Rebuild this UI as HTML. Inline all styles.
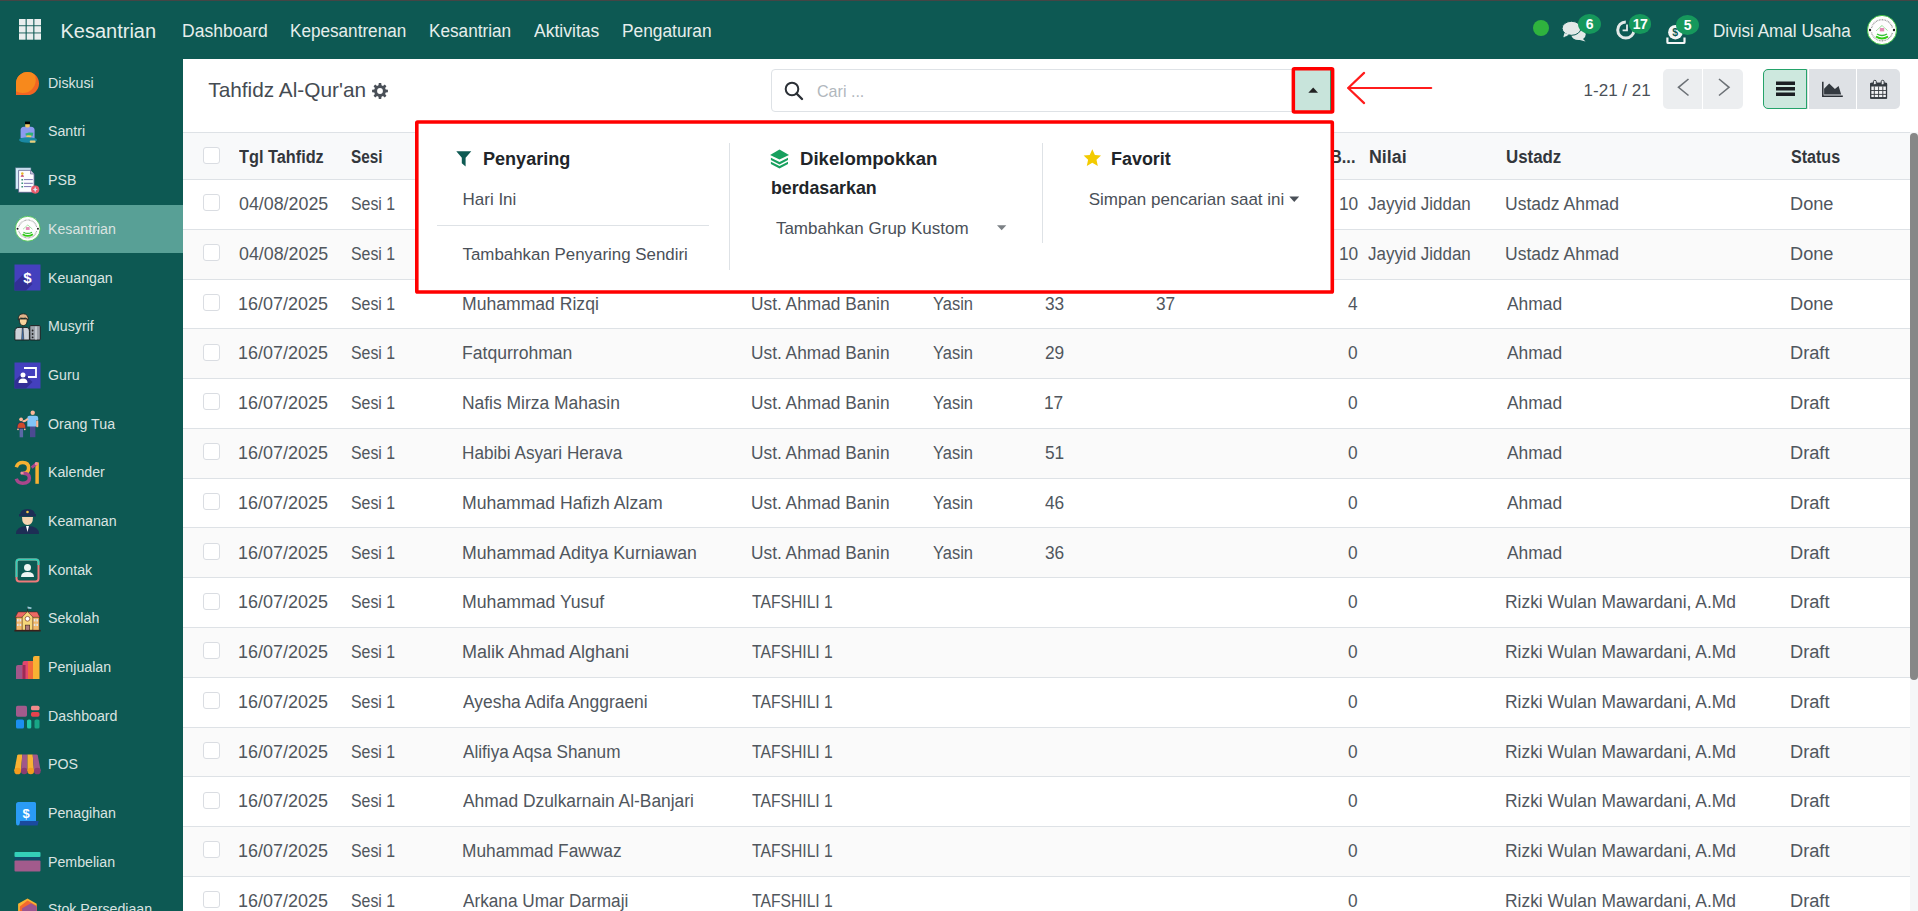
<!DOCTYPE html><html><head><meta charset="utf-8"><title>Tahfidz Al-Qur'an</title><style>
*{box-sizing:border-box;margin:0;padding:0}
html,body{width:1918px;height:911px;overflow:hidden;background:#fff;font-family:"Liberation Sans",sans-serif}
.a{position:absolute}
.t{position:absolute;white-space:nowrap;line-height:1}
svg{position:absolute;overflow:visible}
</style></head><body>
<div class="a" style="left:0;top:0;width:1918px;height:1px;background:#454545"></div><div class="a" style="left:0;top:1px;width:1918px;height:57.5px;background:#0d5953"></div><div class="a" style="left:0;top:58.5px;width:183px;height:853px;background:#0d5953"></div><div class="a" style="left:0;top:205px;width:183px;height:47.75px;background:#58a096"></div><svg style="left:0;top:0" width="60" height="58"><rect x="19.00" y="19.00" width="6.6" height="6.3" fill="#e9efee"/><rect x="26.70" y="19.00" width="6.6" height="6.3" fill="#e9efee"/><rect x="34.40" y="19.00" width="6.6" height="6.3" fill="#e9efee"/><rect x="19.00" y="26.20" width="6.6" height="6.3" fill="#e9efee"/><rect x="26.70" y="26.20" width="6.6" height="6.3" fill="#e9efee"/><rect x="34.40" y="26.20" width="6.6" height="6.3" fill="#e9efee"/><rect x="19.00" y="33.40" width="6.6" height="6.3" fill="#e9efee"/><rect x="26.70" y="33.40" width="6.6" height="6.3" fill="#e9efee"/><rect x="34.40" y="33.40" width="6.6" height="6.3" fill="#e9efee"/></svg><div class="t" style="left:60.50px;top:21.17px;font-size:20px;color:#e6eeec;">Kesantrian</div>
<div class="t" style="left:181.60px;top:22.06px;font-size:18px;color:#e6eeec;transform:scaleX(0.9741);transform-origin:0 0;">Dashboard</div>
<div class="t" style="left:290.03px;top:22.06px;font-size:18px;color:#e6eeec;transform:scaleX(0.9520);transform-origin:0 0;">Kepesantrenan</div>
<div class="t" style="left:428.73px;top:22.06px;font-size:18px;color:#e6eeec;transform:scaleX(0.9541);transform-origin:0 0;">Kesantrian</div>
<div class="t" style="left:533.90px;top:22.06px;font-size:18px;color:#e6eeec;transform:scaleX(0.9741);transform-origin:0 0;">Aktivitas</div>
<div class="t" style="left:622.21px;top:22.06px;font-size:18px;color:#e6eeec;transform:scaleX(0.9630);transform-origin:0 0;">Pengaturan</div>
<div class="a" style="left:1532.5px;top:20.3px;width:16px;height:16px;border-radius:50%;background:#2fb33e"></div><svg style="left:1558px;top:16px" width="32" height="30">
<ellipse cx="20.5" cy="18.5" rx="7.2" ry="5.6" fill="#e3e9e8"/>
<path d="M24 22 L27.5 25.5 L20 23.5Z" fill="#e3e9e8"/>
<path d="M7 17.5 L5 22 L11.5 19Z" fill="#e3e9e8" stroke="#0d5953" stroke-width="0.8"/>
<ellipse cx="13.5" cy="12.3" rx="9.4" ry="7" fill="#e3e9e8" stroke="#0d5953" stroke-width="1"/>
<path d="M6.5 17 L5.3 21 L11 18.3Z" fill="#e3e9e8"/>
</svg><svg style="left:1614px;top:18px" width="24" height="24">
<path d="M11.8 3.9 A8.1 8.1 0 1 0 19.9 12" fill="none" stroke="#e3e9e8" stroke-width="3"/>
<path d="M13 6.5 V12.3 H8.6" fill="none" stroke="#e3e9e8" stroke-width="1.8"/>
</svg><svg style="left:1664px;top:22px" width="24" height="24">
<path d="M3.4 15.5 V20.2 Q3.4 21 4.2 21 H19.7 Q20.5 21 20.5 20.2 V15.5" fill="none" stroke="#f4f6f6" stroke-width="2.2"/>
<circle cx="11.4" cy="10.2" r="7.3" fill="#f4f6f6"/>
<text x="11.2" y="14" font-size="10.5" font-family="Liberation Sans" font-weight="bold" text-anchor="middle" fill="#0d5953">$</text>
</svg><div class="a" style="left:1577.9px;top:14px;width:23.0px;height:20.0px;border-radius:50%;background:#16985c;color:#fff;font-weight:bold;font-size:14px;line-height:20.0px;text-align:center;letter-spacing:-0.5px">6</div><div class="a" style="left:1628.6px;top:14px;width:22.8px;height:20.0px;border-radius:50%;background:#16985c;color:#fff;font-weight:bold;font-size:14px;line-height:20.0px;text-align:center;letter-spacing:-0.5px">17</div><div class="a" style="left:1676px;top:15px;width:23.0px;height:20.0px;border-radius:50%;background:#16985c;color:#fff;font-weight:bold;font-size:14px;line-height:20.0px;text-align:center;letter-spacing:-0.5px">5</div><div class="t" style="left:1713.03px;top:22.36px;font-size:18px;color:#e6eeec;transform:scaleX(0.9502);transform-origin:0 0;">Divisi Amal Usaha</div>
<svg style="left:1867px;top:14.8px" width="30" height="30" viewBox="0 0 30 30">
<circle cx="15" cy="15" r="14.6" fill="#fdfdfd" stroke="#3ec43e" stroke-width="0.9"/>
<path d="M4.5 13 A10.8 10.8 0 0 1 25.5 13" fill="none" stroke="#9a9a9a" stroke-width="1.3" stroke-dasharray="0.9 0.7"/>
<path d="M4.5 17.5 A10.8 10.8 0 0 0 25.5 17.5" fill="none" stroke="#9a9a9a" stroke-width="1.3" stroke-dasharray="0.9 0.7"/>
<circle cx="3" cy="15" r="1.2" fill="#222"/><circle cx="27" cy="15" r="1.2" fill="#222"/>
<path d="M9.5 15.5 L15 10.5 L20.5 15.5" fill="none" stroke="#5fcf5f" stroke-width="1" stroke-dasharray="1 0.6"/>
<rect x="12.8" y="13" width="4.4" height="3.4" fill="#e58ab5"/>
<path d="M10 19 Q15 22 20 19" fill="none" stroke="#36c236" stroke-width="1.4"/>
<path d="M9 21.5 Q15 25.5 21 21.5" fill="none" stroke="#2fcc12" stroke-width="2"/>
</svg><div class="t" style="left:47.86px;top:74.76px;font-size:15.4px;color:#dae3e1;transform:scaleX(0.9220);transform-origin:0 0;">Diskusi</div>
<div class="t" style="left:48.36px;top:123.45px;font-size:15.4px;color:#dae3e1;transform:scaleX(0.9220);transform-origin:0 0;">Santri</div>
<div class="t" style="left:47.86px;top:172.14px;font-size:15.4px;color:#dae3e1;transform:scaleX(0.9220);transform-origin:0 0;">PSB</div>
<div class="t" style="left:47.86px;top:220.83px;font-size:15.4px;color:#dae3e1;transform:scaleX(0.9220);transform-origin:0 0;">Kesantrian</div>
<div class="t" style="left:47.86px;top:269.52px;font-size:15.4px;color:#dae3e1;transform:scaleX(0.9220);transform-origin:0 0;">Keuangan</div>
<div class="t" style="left:47.86px;top:318.21px;font-size:15.4px;color:#dae3e1;transform:scaleX(0.9220);transform-origin:0 0;">Musyrif</div>
<div class="t" style="left:48.29px;top:366.90px;font-size:15.4px;color:#dae3e1;transform:scaleX(0.9220);transform-origin:0 0;">Guru</div>
<div class="t" style="left:48.36px;top:415.59px;font-size:15.4px;color:#dae3e1;transform:scaleX(0.9220);transform-origin:0 0;">Orang Tua</div>
<div class="t" style="left:47.86px;top:464.28px;font-size:15.4px;color:#dae3e1;transform:scaleX(0.9220);transform-origin:0 0;">Kalender</div>
<div class="t" style="left:47.86px;top:512.97px;font-size:15.4px;color:#dae3e1;transform:scaleX(0.9220);transform-origin:0 0;">Keamanan</div>
<div class="t" style="left:47.86px;top:561.66px;font-size:15.4px;color:#dae3e1;transform:scaleX(0.9220);transform-origin:0 0;">Kontak</div>
<div class="t" style="left:48.36px;top:610.35px;font-size:15.4px;color:#dae3e1;transform:scaleX(0.9220);transform-origin:0 0;">Sekolah</div>
<div class="t" style="left:47.86px;top:659.04px;font-size:15.4px;color:#dae3e1;transform:scaleX(0.9220);transform-origin:0 0;">Penjualan</div>
<div class="t" style="left:47.86px;top:707.73px;font-size:15.4px;color:#dae3e1;transform:scaleX(0.9220);transform-origin:0 0;">Dashboard</div>
<div class="t" style="left:47.86px;top:756.42px;font-size:15.4px;color:#dae3e1;transform:scaleX(0.9220);transform-origin:0 0;">POS</div>
<div class="t" style="left:47.86px;top:805.11px;font-size:15.4px;color:#dae3e1;transform:scaleX(0.9220);transform-origin:0 0;">Penagihan</div>
<div class="t" style="left:47.86px;top:853.80px;font-size:15.4px;color:#dae3e1;transform:scaleX(0.9220);transform-origin:0 0;">Pembelian</div>
<div class="t" style="left:48.36px;top:901.29px;font-size:15.4px;color:#dae3e1;transform:scaleX(0.9220);transform-origin:0 0;">Stok Persediaan</div>
<svg style="left:14px;top:69.60px" width="27" height="27" viewBox="0 0 27 27"><defs><clipPath id="dk"><path d="M2 25 L2 13.5 A11.5 11.5 0 1 1 13.5 25 Z"/></clipPath></defs><g clip-path="url(#dk)"><rect x="0" y="0" width="27" height="27" fill="#f26522"/><circle cx="8.6" cy="9.8" r="13.2" fill="#f7891c"/></g></svg><svg style="left:14px;top:118.29px" width="27" height="27" viewBox="0 0 27 27"><rect x="11" y="3.6" width="5" height="2.9" fill="#000"/><path d="M11.2 6.3 H15.8 V9.5 Q15.8 10.8 13.5 10.8 Q11.2 10.8 11.2 9.5Z" fill="#f4c866"/><path d="M6.6 20 V12 Q6.6 8.9 10 8.7 L11.5 8.7 Q13.5 10.5 15.5 8.7 L17 8.7 Q20.6 8.9 20.6 12 V20Z" fill="#8c9cf0"/><path d="M11.4 15.5 L15 14.4 L19.4 14.8 L18.5 18.2 L12 18.2Z" fill="#2fb07a"/><path d="M12.2 17.5 Q14.5 16.8 17.5 17.6 L17 19.8 H12.6Z" fill="#f4c866"/><ellipse cx="14" cy="22" rx="9" ry="2.7" fill="#1a88a3"/><rect x="15.8" y="22.4" width="5.7" height="2.3" rx="0.8" fill="#e9cf7a"/></svg><svg style="left:14px;top:166.98px" width="27" height="27" viewBox="0 0 27 27"><rect x="1.7" y="0.9" width="15.2" height="21.1" fill="#d3ebf7" stroke="#7a86a8" stroke-width="0.5"/><path d="M4.6 3.3 H16.5 L20.1 7 V25.3 H4.6Z" fill="#fdfdff" stroke="#5c5c8c" stroke-width="0.8"/><path d="M16.5 3.3 V7 H20.1" fill="#c9c9e0" stroke="#5c5c8c" stroke-width="0.6"/><circle cx="8.3" cy="6.6" r="1.3" fill="#e8b830"/><path d="M6.6 9.8 Q6.6 8 8.3 8 Q10 8 10 9.8Z" fill="#c0406a"/><path d="M7.4 12 h1.7 v1.5 h-1.7z M7.4 15.6 h1.7 v1.5 h-1.7z M7.4 18.9 h1.7 v1.5 h-1.7z" fill="#3f8f7a"/><path d="M10 12.6 H18.8 M10 16.3 H18.8 M10 19.6 H17.5" stroke="#7a72b0" stroke-width="1"/><circle cx="21.2" cy="22.6" r="4.1" fill="#e95b6b"/><path d="M21.2 19.6 L22.4 22.6 L21.2 25.6 L20 22.6Z M18.6 22.6 L21.2 21.6 L23.8 22.6 L21.2 23.6Z" fill="#dfe3f3"/></svg><svg style="left:14.5px;top:216.07px" width="25.5" height="25.5" viewBox="0 0 30 30">
<circle cx="15" cy="15" r="14.6" fill="#fdfdfd" stroke="#3ec43e" stroke-width="0.9"/>
<path d="M4.5 13 A10.8 10.8 0 0 1 25.5 13" fill="none" stroke="#9a9a9a" stroke-width="1.3" stroke-dasharray="0.9 0.7"/>
<path d="M4.5 17.5 A10.8 10.8 0 0 0 25.5 17.5" fill="none" stroke="#9a9a9a" stroke-width="1.3" stroke-dasharray="0.9 0.7"/>
<circle cx="3" cy="15" r="1.2" fill="#222"/><circle cx="27" cy="15" r="1.2" fill="#222"/>
<path d="M9.5 15.5 L15 10.5 L20.5 15.5" fill="none" stroke="#5fcf5f" stroke-width="1" stroke-dasharray="1 0.6"/>
<rect x="12.8" y="13" width="4.4" height="3.4" fill="#e58ab5"/>
<path d="M10 19 Q15 22 20 19" fill="none" stroke="#36c236" stroke-width="1.4"/>
<path d="M9 21.5 Q15 25.5 21 21.5" fill="none" stroke="#2fcc12" stroke-width="2"/>
</svg><svg style="left:14px;top:264.36px" width="27" height="27" viewBox="0 0 27 27"><rect x="0.5" y="0.5" width="26" height="26" fill="#4440bd"/><path d="M0.5 26.5 L0.5 19 L9 10.5 L18.5 20 L12 26.5 Z" fill="#2c2a8a" opacity="0.75"/><text x="13.5" y="19" font-size="15" font-weight="bold" font-family="Liberation Sans" text-anchor="middle" fill="#fff">$</text></svg><svg style="left:14px;top:313.05px" width="27" height="27" viewBox="0 0 27 27"><rect x="15.8" y="12.6" width="10.5" height="14.4" rx="1" fill="#9ca2aa" stroke="#1a1a1a" stroke-width="0.9"/><path d="M22 13.5 V26.5" stroke="#c5cad0" stroke-width="2"/><circle cx="18.6" cy="17.5" r="0.9" fill="#222"/><circle cx="18.6" cy="21" r="0.9" fill="#222"/><circle cx="18.6" cy="24.3" r="0.9" fill="#222"/><path d="M0.9 27 V18.5 Q0.9 14.4 5 14.4 H12 Q15.4 14.4 15.4 18.5 V27Z" fill="#cdd1d8" stroke="#1a1a1a" stroke-width="0.9"/><path d="M8.3 15 L7.6 26.6 H9.8 L9.1 15Z" fill="#4a78b8" stroke="#1a1a1a" stroke-width="0.5"/><path d="M5.3 6 Q5.3 12.6 9.3 12.6 Q13.3 12.6 13.3 6Z" fill="#f8d49c" stroke="#1a1a1a" stroke-width="0.8"/><path d="M4.3 6.9 Q3.9 0.8 9.2 0.8 Q14.5 0.8 14.2 6.9 Q12 4 9.2 5.3 Q6.5 4 4.3 6.9Z" fill="#e0b48a" stroke="#1a1a1a" stroke-width="0.8"/></svg><svg style="left:14px;top:361.74px" width="27" height="27" viewBox="0 0 27 27"><rect x="0.5" y="0.5" width="26" height="26" fill="#4440bd"/><path d="M0.5 26.5 L0.5 19 L9 10.5 L18.5 20 L12 26.5 Z" fill="#2c2a8a" opacity="0.75"/><path d="M10 6 H22 V15 H14" fill="none" stroke="#fff" stroke-width="1.8"/><circle cx="9" cy="13" r="2.5" fill="#fff"/><path d="M4.5 21 Q4.5 16.5 9 16.5 Q13.5 16.5 13.5 21Z" fill="#fff"/></svg><svg style="left:14px;top:410.43px" width="27" height="27" viewBox="0 0 27 27"><rect x="16" y="16" width="5.4" height="11.2" fill="#4c4a92"/><path d="M13.3 16.5 V8 Q13.3 5.7 15.6 5.7 H21.7 Q24.2 5.7 24.2 8 V10.6 H22 V16.5Z" fill="#82c5f8"/><rect x="22.1" y="10.4" width="2.2" height="6.9" rx="1" fill="#fdb89a"/><circle cx="18.7" cy="2.7" r="2.2" fill="#fdb89a"/><path d="M14 8.8 Q11.5 11.2 8.5 11.6" fill="none" stroke="#fdb89a" stroke-width="2"/><circle cx="7.1" cy="9.3" r="1.9" fill="#fdb89a"/><rect x="5.6" y="18.5" width="3.5" height="8.8" fill="#5a68a6"/><path d="M3.1 18.3 Q3.1 12.3 7.4 12.3 Q11.8 12.3 11.8 18.3Z" fill="#d04a2a" stroke="#1d2466" stroke-width="0.6"/><circle cx="4" cy="19.3" r="0.9" fill="#fdb89a"/><circle cx="10.8" cy="19.3" r="0.9" fill="#fdb89a"/></svg><svg style="left:14px;top:459.12px" width="27" height="27" viewBox="0 0 27 27"><path d="M2.3 8.2 Q3.8 3.6 8.7 3.6 Q14.6 3.6 14.6 9 Q14.6 14.2 9.2 14.2" fill="none" stroke="#f6b132" stroke-width="3.5"/><path d="M9.2 14.2 Q15.4 14.2 15.4 19 Q15.4 24.2 8.7 24.2 Q3.8 24.2 2.3 19.8" fill="none" stroke="#a8468c" stroke-width="3.5"/><circle cx="8" cy="14.1" r="1.7" fill="#f08aa0"/><path d="M23.1 3.4 V24.8" stroke="#f6b132" stroke-width="3.5"/><path d="M17.6 8.6 L22.6 4.6" stroke="#a8468c" stroke-width="3"/><circle cx="22.4" cy="4.8" r="1.7" fill="#f08aa0"/></svg><svg style="left:14px;top:507.81px" width="27" height="27" viewBox="0 0 27 27"><path d="M6 7 Q6 1 13.5 1 Q21 1 21 7Z" fill="#1d2e55"/><rect x="5" y="6" width="17" height="2.5" fill="#1d2e55"/><circle cx="13.5" cy="4" r="1.3" fill="#f5c242"/><path d="M8 9 Q8 17 13.5 17 Q19 17 19 9Z" fill="#f7d6b2"/><path d="M2 26 Q2 18 13.5 18 Q25 18 25 26Z" fill="#1d2e55"/><path d="M12 18 L13.5 24 L15 18Z" fill="#fff"/></svg><svg style="left:14px;top:556.50px" width="27" height="27" viewBox="0 0 27 27"><rect x="2.5" y="2.5" width="22" height="22" rx="3" fill="none" stroke="#f07a7a" stroke-width="2"/><path d="M24.5 8 V5 Q24.5 2.5 22 2.5 H5 Q2.5 2.5 2.5 5 V20" fill="none" stroke="#34d0b8" stroke-width="2"/><circle cx="13.5" cy="10.5" r="3.5" fill="#eef5f3"/><path d="M7 20 Q7 15 13.5 15 Q20 15 20 20Z" fill="#eef5f3"/></svg><svg style="left:14px;top:605.19px" width="27" height="27" viewBox="0 0 27 27"><path d="M13.5 2 V7" stroke="#222" stroke-width="0.6"/><path d="M13.5 1.6 L17.7 2.4 L17.2 4.1 L13.5 3.6Z" fill="#9ccbd8"/><path d="M4 6.9 H23.3 L26 12.4 H1.2Z" fill="#ec6a64" stroke="#5a2020" stroke-width="0.6"/><rect x="2.1" y="12.2" width="23" height="13" fill="#f2b86a" stroke="#4a2a1a" stroke-width="0.5"/><path d="M13.5 6.6 L18.8 12 V25.3 H8.2 V12Z" fill="#f6d77a" stroke="#4a2a1a" stroke-width="0.6"/><circle cx="13.5" cy="13.8" r="2.4" fill="#fff" stroke="#8a4a3a" stroke-width="0.8"/><rect x="11.3" y="20.1" width="4.4" height="5.2" fill="#b07a7a" stroke="#3a1f1a" stroke-width="0.6"/><path d="M3 14 h1.6 v2.4 h-1.6z M5.6 14 h1.6 v2.4 h-1.6z M3 18.7 h1.6 v2.4 h-1.6z M5.6 18.7 h1.6 v2.4 h-1.6z M19.8 14 h1.6 v2.4 h-1.6z M22.4 14 h1.6 v2.4 h-1.6z M19.8 18.7 h1.6 v2.4 h-1.6z M22.4 18.7 h1.6 v2.4 h-1.6z" fill="#dfe4e8"/><rect x="0.4" y="24.9" width="26.3" height="1.6" fill="#3a1f1a"/></svg><svg style="left:14px;top:653.88px" width="27" height="27" viewBox="0 0 27 27"><path d="M2 25 V13 Q2 11 4 11 H9 V25Z" fill="#a0578a"/><path d="M8.5 25 V9 Q8.5 7 10.5 7 H15 V25Z" fill="#e2466e"/><path d="M8.5 25 V11 H11.5 V25Z" fill="#9c2b55"/><path d="M14 25 V7 H19.5 V25Z" fill="#f26b3a"/><path d="M19 25 V4 Q19 2 21 2 H25.5 V25Z" fill="#f9b233"/></svg><svg style="left:14px;top:702.57px" width="27" height="27" viewBox="0 0 27 27"><rect x="2" y="2.7" width="11" height="11" rx="1.6" fill="#a25b8c"/><rect x="17" y="2.7" width="8.5" height="4.6" rx="1.6" fill="#f28b8b"/><rect x="17" y="9.1" width="8.5" height="4.6" rx="1.6" fill="#e5424d"/><rect x="2" y="16.5" width="8" height="9" rx="1.6" fill="#1c8ff0"/><rect x="13" y="16.5" width="4.3" height="9" rx="1.6" fill="#21c7a8"/><rect x="20.5" y="16.5" width="5" height="9" rx="1.6" fill="#18a686"/></svg><svg style="left:14px;top:751.26px" width="27" height="27" viewBox="0 0 27 27"><path d="M3.2 4.4 Q3.5 3.6 4.5 3.6 H8.3 L7 20 H0.3 Z" fill="#f9b233"/><circle cx="3.65" cy="20" r="3.35" fill="#f39c1e"/><path d="M8.3 3.6 H13.5 V20 H7 Z" fill="#a0578a"/><circle cx="10.25" cy="20" r="3.25" fill="#8a3d72"/><path d="M13.5 3.6 H18.7 L20 20 H13.5 Z" fill="#f9b233"/><circle cx="16.75" cy="20" r="3.25" fill="#f39c1e"/><path d="M18.7 3.6 H22.5 Q23.5 3.6 23.8 4.4 L26.7 20 H20 Z" fill="#a0578a"/><circle cx="23.35" cy="20" r="3.35" fill="#8a3d72"/></svg><svg style="left:14px;top:799.95px" width="27" height="27" viewBox="0 0 27 27"><path d="M6 21 H24.7 L23.6 25.6 H4.5 Q6 25 6 21Z" fill="#1b4a9e"/><path d="M4.5 2 H20.5 Q22 2 22 3.5 V21 H6 Q6 25.6 3.8 25.6 Q2 25.6 2 23 V4.5 Q2 2 4.5 2 Z" fill="#2a9bf5"/><text x="12" y="18.3" font-size="13" font-weight="bold" font-family="Liberation Sans" text-anchor="middle" fill="#fff">$</text></svg><svg style="left:14px;top:848.64px" width="27" height="27" viewBox="0 0 27 27"><rect x="0.5" y="3" width="26" height="5" rx="1" fill="#34d0b8"/><rect x="0.5" y="8" width="26" height="3.5" fill="#114d6a"/><rect x="0.5" y="11.5" width="26" height="11" rx="1" fill="#a25b8c"/></svg><svg style="left:14px;top:897.33px" width="27" height="27" viewBox="0 0 27 27"><path d="M13.5 1.4 L22.7 6.7 V20 L13.5 25.3 L4.1 20 V6.7Z" fill="#f9b233"/><path d="M13.5 3.4 L22.7 8.7 V20 L13.5 25.3 L5.8 21 V9.4Z" fill="#f2682f"/><path d="M17 6.3 L22.7 9.6 V20 L13.5 25.3 L8.1 22.3 V11.2Z" fill="#9c5590"/></svg><div class="t" style="left:208.30px;top:80.29px;font-size:20.8px;color:#454b52;">Tahfidz Al-Qur'an</div>
<svg style="left:372.1px;top:83.3px" width="16" height="16" viewBox="0 0 16 16"><path fill="#4a5058" fill-rule="evenodd" d="M13.70 6.48 L15.91 6.80 L15.91 9.20 L13.70 9.52 L13.10 10.96 L14.44 12.75 L12.75 14.44 L10.96 13.10 L9.52 13.70 L9.20 15.91 L6.80 15.91 L6.48 13.70 L5.04 13.10 L3.25 14.44 L1.56 12.75 L2.90 10.96 L2.30 9.52 L0.09 9.20 L0.09 6.80 L2.30 6.48 L2.90 5.04 L1.56 3.25 L3.25 1.56 L5.04 2.90 L6.48 2.30 L6.80 0.09 L9.20 0.09 L9.52 2.30 L10.96 2.90 L12.75 1.56 L14.44 3.25 L13.10 5.04Z M8 5.1 A2.9 2.9 0 1 0 8 10.9 A2.9 2.9 0 1 0 8 5.1Z"/></svg><div class="a" style="left:771px;top:69px;width:563px;height:43px;border:1px solid #dee2e6;border-radius:4px;background:#fff"></div><svg style="left:784px;top:81px" width="20" height="20">
<circle cx="8" cy="8" r="6.3" fill="none" stroke="#2b3036" stroke-width="2"/>
<path d="M12.5 12.5 L18 18" stroke="#2b3036" stroke-width="2.4" stroke-linecap="round"/>
</svg><div class="t" style="left:817.40px;top:82.51px;font-size:17px;color:#b1b7bd;transform:scaleX(0.9454);transform-origin:0 0;">Cari ...</div>
<div class="a" style="left:1293px;top:69px;width:38px;height:43px;background:#c8e4db;border-right:1px solid #2aa06c"></div><svg style="left:1285px;top:60px" width="56" height="60"><rect x="8.35" y="8.75" width="39.3" height="43.2" rx="1" fill="none" stroke="#ff0000" stroke-width="3.5"/></svg><svg style="left:1308px;top:87px" width="11" height="6"><path d="M0.3 5.7 L5.2 0.5 L10 5.7Z" fill="#222"/></svg><svg style="left:1340px;top:65px" width="100" height="46"><path d="M91.2 23 H8.5" stroke="#ff1c1c" stroke-width="2.2" stroke-linecap="round"/><path d="M24.1 7.9 L8.2 23 L24.1 38.1" fill="none" stroke="#ff1c1c" stroke-width="2.2" stroke-linecap="round" stroke-linejoin="round"/></svg><div class="t" style="left:1583.60px;top:81.51px;font-size:17px;color:#4a5058;">1-21 / 21</div>
<div class="a" style="left:1663px;top:69px;width:80px;height:39.6px;background:#eceef0;border-radius:5px"></div><div class="a" style="left:1702px;top:69px;width:1px;height:39.6px;background:#fff"></div><svg style="left:1676px;top:78px" width="60" height="20"><path d="M12.5 1 L2.5 9.3 L12.5 17.5" fill="none" stroke="#6c7176" stroke-width="1.6"/><path d="M43 1 L53 9.3 L43 17.5" fill="none" stroke="#6c7176" stroke-width="1.6"/></svg><div class="a" style="left:1763px;top:69px;width:137px;height:39.6px;background:#dee1e5;border-radius:5px"></div><div class="a" style="left:1856px;top:69px;width:1px;height:39.6px;background:#fff"></div><div class="a" style="left:1808px;top:69px;width:1px;height:39.6px;background:#fff"></div><div class="a" style="left:1763px;top:69px;width:44px;height:39.6px;background:#cde8de;border:1.3px solid #24a36a;border-radius:5px 0 0 5px"></div><svg style="left:1776px;top:81px" width="20" height="16"><rect x="0" y="0.5" width="19" height="3.5" fill="#1b1f23"/><rect x="0" y="6" width="19" height="3.5" fill="#1b1f23"/><rect x="0" y="11.5" width="19" height="3.5" fill="#1b1f23"/></svg><svg style="left:1821px;top:81px" width="24" height="18"><path d="M1.8 0.8 V15.3 H21.8" fill="none" stroke="#2b3036" stroke-width="1.5"/><path d="M3.1 13.6 V7.8 L8.2 2.4 L13.9 8 L17.6 5 L20.2 13.6 Z" fill="#343a40"/></svg><svg style="left:1869px;top:79px" width="20" height="21"><rect x="1.7" y="4.3" width="15.8" height="14.8" rx="1.2" fill="#f2f3f5" stroke="#343a40" stroke-width="1.3"/><rect x="1.1" y="3.7" width="17" height="3.9" rx="1" fill="#343a40"/><rect x="18" y="18" width="0" height="0"/><path d="M5.3 7.4 V19 M9.6 7.4 V19 M13.8 7.4 V19 M1.5 11.5 H17.7 M1.5 15.4 H17.7" stroke="#343a40" stroke-width="0.9"/><path d="M1.1 18.9 H18.1" stroke="#343a40" stroke-width="1.6"/><rect x="4.4" y="1.3" width="2.9" height="4.5" rx="1.4" fill="#e8eaed" stroke="#343a40" stroke-width="1"/><rect x="12.2" y="1.3" width="2.9" height="4.5" rx="1.4" fill="#e8eaed" stroke="#343a40" stroke-width="1"/></svg><div class="a" style="left:183px;top:132px;width:1735px;height:48px;background:#f8f9fa;border-top:1px solid #dee2e6;border-bottom:1px solid #dee2e6"></div><div class="a" style="left:203px;top:147.30px;width:17px;height:17px;border:1px solid #dadde2;border-radius:3px;background:#fff"></div><div class="t" style="left:239.34px;top:148.90px;font-size:17.6px;color:#33373c;font-weight:bold;transform:scaleX(0.9260);transform-origin:0 0;">Tgl Tahfidz</div>
<div class="t" style="left:350.84px;top:148.90px;font-size:17.6px;color:#33373c;font-weight:bold;transform:scaleX(0.8697);transform-origin:0 0;">Sesi</div>
<div class="t" style="left:1368.54px;top:148.90px;font-size:17.6px;color:#33373c;font-weight:bold;transform:scaleX(1.0130);transform-origin:0 0;">Nilai</div>
<div class="t" style="left:1505.59px;top:148.90px;font-size:17.6px;color:#33373c;font-weight:bold;transform:scaleX(0.9580);transform-origin:0 0;">Ustadz</div>
<div class="t" style="left:1790.92px;top:148.90px;font-size:17.6px;color:#33373c;font-weight:bold;transform:scaleX(0.9137);transform-origin:0 0;">Status</div>
<div class="t" style="left:1329.91px;top:148.90px;font-size:17.6px;color:#33373c;font-weight:bold;transform:scaleX(0.9300);transform-origin:0 0;">B...</div>
<div class="a" style="left:183px;top:180.00px;width:1735px;height:49.8px;background:#ffffff;border-bottom:1px solid #dee2e6"></div><div class="a" style="left:203px;top:194.30px;width:17px;height:17px;border:1px solid #dadde2;border-radius:3px;background:#fff"></div><div class="t" style="left:238.99px;top:195.06px;font-size:18px;color:#50565d;transform:scaleX(0.9904);transform-origin:0 0;">04/08/2025</div>
<div class="t" style="left:350.59px;top:195.06px;font-size:18px;color:#50565d;transform:scaleX(0.8819);transform-origin:0 0;">Sesi 1</div>
<div class="t" style="left:1338.50px;top:195.06px;font-size:18px;color:#50565d;transform:scaleX(0.9610);transform-origin:0 0;">10</div>
<div class="t" style="left:1368.45px;top:195.06px;font-size:18px;color:#50565d;transform:scaleX(0.9420);transform-origin:0 0;">Jayyid Jiddan</div>
<div class="t" style="left:1505.28px;top:195.06px;font-size:18px;color:#50565d;transform:scaleX(0.9748);transform-origin:0 0;">Ustadz Ahmad</div>
<div class="t" style="left:1789.94px;top:195.06px;font-size:18px;color:#50565d;transform:scaleX(1.0105);transform-origin:0 0;">Done</div>
<div class="a" style="left:183px;top:229.78px;width:1735px;height:49.8px;background:#fafafa;border-bottom:1px solid #dee2e6"></div><div class="a" style="left:203px;top:244.08px;width:17px;height:17px;border:1px solid #dadde2;border-radius:3px;background:#fff"></div><div class="t" style="left:238.99px;top:244.84px;font-size:18px;color:#50565d;transform:scaleX(0.9904);transform-origin:0 0;">04/08/2025</div>
<div class="t" style="left:350.59px;top:244.84px;font-size:18px;color:#50565d;transform:scaleX(0.8819);transform-origin:0 0;">Sesi 1</div>
<div class="t" style="left:1338.50px;top:244.84px;font-size:18px;color:#50565d;transform:scaleX(0.9610);transform-origin:0 0;">10</div>
<div class="t" style="left:1368.45px;top:244.84px;font-size:18px;color:#50565d;transform:scaleX(0.9420);transform-origin:0 0;">Jayyid Jiddan</div>
<div class="t" style="left:1505.28px;top:244.84px;font-size:18px;color:#50565d;transform:scaleX(0.9748);transform-origin:0 0;">Ustadz Ahmad</div>
<div class="t" style="left:1789.94px;top:244.84px;font-size:18px;color:#50565d;transform:scaleX(1.0105);transform-origin:0 0;">Done</div>
<div class="a" style="left:183px;top:279.56px;width:1735px;height:49.8px;background:#ffffff;border-bottom:1px solid #dee2e6"></div><div class="a" style="left:203px;top:293.86px;width:17px;height:17px;border:1px solid #dadde2;border-radius:3px;background:#fff"></div><div class="t" style="left:238.35px;top:294.62px;font-size:18px;color:#50565d;transform:scaleX(0.9975);transform-origin:0 0;">16/07/2025</div>
<div class="t" style="left:350.59px;top:294.62px;font-size:18px;color:#50565d;transform:scaleX(0.8819);transform-origin:0 0;">Sesi 1</div>
<div class="t" style="left:461.99px;top:294.62px;font-size:18px;color:#50565d;transform:scaleX(0.9772);transform-origin:0 0;">Muhammad Rizqi</div>
<div class="t" style="left:750.60px;top:294.62px;font-size:18px;color:#50565d;transform:scaleX(0.9614);transform-origin:0 0;">Ust. Ahmad Banin</div>
<div class="t" style="left:933.29px;top:294.62px;font-size:18px;color:#50565d;transform:scaleX(0.9160);transform-origin:0 0;">Yasin</div>
<div class="t" style="left:1044.91px;top:294.62px;font-size:18px;color:#50565d;transform:scaleX(0.9610);transform-origin:0 0;">33</div>
<div class="t" style="left:1156.31px;top:294.62px;font-size:18px;color:#50565d;transform:scaleX(0.9610);transform-origin:0 0;">37</div>
<div class="t" style="left:1348.02px;top:294.62px;font-size:18px;color:#50565d;transform:scaleX(0.9610);transform-origin:0 0;">4</div>
<div class="t" style="left:1506.60px;top:294.62px;font-size:18px;color:#50565d;transform:scaleX(0.9659);transform-origin:0 0;">Ahmad</div>
<div class="t" style="left:1789.94px;top:294.62px;font-size:18px;color:#50565d;transform:scaleX(1.0105);transform-origin:0 0;">Done</div>
<div class="a" style="left:183px;top:329.34px;width:1735px;height:49.8px;background:#fafafa;border-bottom:1px solid #dee2e6"></div><div class="a" style="left:203px;top:343.64px;width:17px;height:17px;border:1px solid #dadde2;border-radius:3px;background:#fff"></div><div class="t" style="left:238.35px;top:344.40px;font-size:18px;color:#50565d;transform:scaleX(0.9975);transform-origin:0 0;">16/07/2025</div>
<div class="t" style="left:350.59px;top:344.40px;font-size:18px;color:#50565d;transform:scaleX(0.8819);transform-origin:0 0;">Sesi 1</div>
<div class="t" style="left:461.99px;top:344.40px;font-size:18px;color:#50565d;transform:scaleX(0.9762);transform-origin:0 0;">Fatqurrohman</div>
<div class="t" style="left:750.60px;top:344.40px;font-size:18px;color:#50565d;transform:scaleX(0.9614);transform-origin:0 0;">Ust. Ahmad Banin</div>
<div class="t" style="left:933.29px;top:344.40px;font-size:18px;color:#50565d;transform:scaleX(0.9160);transform-origin:0 0;">Yasin</div>
<div class="t" style="left:1044.74px;top:344.40px;font-size:18px;color:#50565d;transform:scaleX(0.9610);transform-origin:0 0;">29</div>
<div class="t" style="left:1348.11px;top:344.40px;font-size:18px;color:#50565d;transform:scaleX(0.9610);transform-origin:0 0;">0</div>
<div class="t" style="left:1506.60px;top:344.40px;font-size:18px;color:#50565d;transform:scaleX(0.9659);transform-origin:0 0;">Ahmad</div>
<div class="t" style="left:1789.94px;top:344.40px;font-size:18px;color:#50565d;transform:scaleX(1.0123);transform-origin:0 0;">Draft</div>
<div class="a" style="left:183px;top:379.12px;width:1735px;height:49.8px;background:#ffffff;border-bottom:1px solid #dee2e6"></div><div class="a" style="left:203px;top:393.42px;width:17px;height:17px;border:1px solid #dadde2;border-radius:3px;background:#fff"></div><div class="t" style="left:238.35px;top:394.18px;font-size:18px;color:#50565d;transform:scaleX(0.9975);transform-origin:0 0;">16/07/2025</div>
<div class="t" style="left:350.59px;top:394.18px;font-size:18px;color:#50565d;transform:scaleX(0.8819);transform-origin:0 0;">Sesi 1</div>
<div class="t" style="left:462.01px;top:394.18px;font-size:18px;color:#50565d;transform:scaleX(0.9683);transform-origin:0 0;">Nafis Mirza Mahasin</div>
<div class="t" style="left:750.60px;top:394.18px;font-size:18px;color:#50565d;transform:scaleX(0.9614);transform-origin:0 0;">Ust. Ahmad Banin</div>
<div class="t" style="left:933.29px;top:394.18px;font-size:18px;color:#50565d;transform:scaleX(0.9160);transform-origin:0 0;">Yasin</div>
<div class="t" style="left:1044.30px;top:394.18px;font-size:18px;color:#50565d;transform:scaleX(0.9610);transform-origin:0 0;">17</div>
<div class="t" style="left:1348.11px;top:394.18px;font-size:18px;color:#50565d;transform:scaleX(0.9610);transform-origin:0 0;">0</div>
<div class="t" style="left:1506.60px;top:394.18px;font-size:18px;color:#50565d;transform:scaleX(0.9659);transform-origin:0 0;">Ahmad</div>
<div class="t" style="left:1789.94px;top:394.18px;font-size:18px;color:#50565d;transform:scaleX(1.0123);transform-origin:0 0;">Draft</div>
<div class="a" style="left:183px;top:428.90px;width:1735px;height:49.8px;background:#fafafa;border-bottom:1px solid #dee2e6"></div><div class="a" style="left:203px;top:443.20px;width:17px;height:17px;border:1px solid #dadde2;border-radius:3px;background:#fff"></div><div class="t" style="left:238.35px;top:443.96px;font-size:18px;color:#50565d;transform:scaleX(0.9975);transform-origin:0 0;">16/07/2025</div>
<div class="t" style="left:350.59px;top:443.96px;font-size:18px;color:#50565d;transform:scaleX(0.8819);transform-origin:0 0;">Sesi 1</div>
<div class="t" style="left:462.03px;top:443.96px;font-size:18px;color:#50565d;transform:scaleX(0.9532);transform-origin:0 0;">Habibi Asyari Herava</div>
<div class="t" style="left:750.60px;top:443.96px;font-size:18px;color:#50565d;transform:scaleX(0.9614);transform-origin:0 0;">Ust. Ahmad Banin</div>
<div class="t" style="left:933.29px;top:443.96px;font-size:18px;color:#50565d;transform:scaleX(0.9160);transform-origin:0 0;">Yasin</div>
<div class="t" style="left:1044.91px;top:443.96px;font-size:18px;color:#50565d;transform:scaleX(0.9610);transform-origin:0 0;">51</div>
<div class="t" style="left:1348.11px;top:443.96px;font-size:18px;color:#50565d;transform:scaleX(0.9610);transform-origin:0 0;">0</div>
<div class="t" style="left:1506.60px;top:443.96px;font-size:18px;color:#50565d;transform:scaleX(0.9659);transform-origin:0 0;">Ahmad</div>
<div class="t" style="left:1789.94px;top:443.96px;font-size:18px;color:#50565d;transform:scaleX(1.0123);transform-origin:0 0;">Draft</div>
<div class="a" style="left:183px;top:478.68px;width:1735px;height:49.8px;background:#ffffff;border-bottom:1px solid #dee2e6"></div><div class="a" style="left:203px;top:492.98px;width:17px;height:17px;border:1px solid #dadde2;border-radius:3px;background:#fff"></div><div class="t" style="left:238.35px;top:493.74px;font-size:18px;color:#50565d;transform:scaleX(0.9975);transform-origin:0 0;">16/07/2025</div>
<div class="t" style="left:350.59px;top:493.74px;font-size:18px;color:#50565d;transform:scaleX(0.8819);transform-origin:0 0;">Sesi 1</div>
<div class="t" style="left:461.99px;top:493.74px;font-size:18px;color:#50565d;transform:scaleX(0.9788);transform-origin:0 0;">Muhammad Hafizh Alzam</div>
<div class="t" style="left:750.60px;top:493.74px;font-size:18px;color:#50565d;transform:scaleX(0.9614);transform-origin:0 0;">Ust. Ahmad Banin</div>
<div class="t" style="left:933.29px;top:493.74px;font-size:18px;color:#50565d;transform:scaleX(0.9160);transform-origin:0 0;">Yasin</div>
<div class="t" style="left:1045.25px;top:493.74px;font-size:18px;color:#50565d;transform:scaleX(0.9610);transform-origin:0 0;">46</div>
<div class="t" style="left:1348.11px;top:493.74px;font-size:18px;color:#50565d;transform:scaleX(0.9610);transform-origin:0 0;">0</div>
<div class="t" style="left:1506.60px;top:493.74px;font-size:18px;color:#50565d;transform:scaleX(0.9659);transform-origin:0 0;">Ahmad</div>
<div class="t" style="left:1789.94px;top:493.74px;font-size:18px;color:#50565d;transform:scaleX(1.0123);transform-origin:0 0;">Draft</div>
<div class="a" style="left:183px;top:528.46px;width:1735px;height:49.8px;background:#fafafa;border-bottom:1px solid #dee2e6"></div><div class="a" style="left:203px;top:542.76px;width:17px;height:17px;border:1px solid #dadde2;border-radius:3px;background:#fff"></div><div class="t" style="left:238.35px;top:543.52px;font-size:18px;color:#50565d;transform:scaleX(0.9975);transform-origin:0 0;">16/07/2025</div>
<div class="t" style="left:350.59px;top:543.52px;font-size:18px;color:#50565d;transform:scaleX(0.8819);transform-origin:0 0;">Sesi 1</div>
<div class="t" style="left:461.99px;top:543.52px;font-size:18px;color:#50565d;transform:scaleX(0.9822);transform-origin:0 0;">Muhammad Aditya Kurniawan</div>
<div class="t" style="left:750.60px;top:543.52px;font-size:18px;color:#50565d;transform:scaleX(0.9614);transform-origin:0 0;">Ust. Ahmad Banin</div>
<div class="t" style="left:933.29px;top:543.52px;font-size:18px;color:#50565d;transform:scaleX(0.9160);transform-origin:0 0;">Yasin</div>
<div class="t" style="left:1044.91px;top:543.52px;font-size:18px;color:#50565d;transform:scaleX(0.9610);transform-origin:0 0;">36</div>
<div class="t" style="left:1348.11px;top:543.52px;font-size:18px;color:#50565d;transform:scaleX(0.9610);transform-origin:0 0;">0</div>
<div class="t" style="left:1506.60px;top:543.52px;font-size:18px;color:#50565d;transform:scaleX(0.9659);transform-origin:0 0;">Ahmad</div>
<div class="t" style="left:1789.94px;top:543.52px;font-size:18px;color:#50565d;transform:scaleX(1.0123);transform-origin:0 0;">Draft</div>
<div class="a" style="left:183px;top:578.24px;width:1735px;height:49.8px;background:#ffffff;border-bottom:1px solid #dee2e6"></div><div class="a" style="left:203px;top:592.54px;width:17px;height:17px;border:1px solid #dadde2;border-radius:3px;background:#fff"></div><div class="t" style="left:238.35px;top:593.30px;font-size:18px;color:#50565d;transform:scaleX(0.9975);transform-origin:0 0;">16/07/2025</div>
<div class="t" style="left:350.59px;top:593.30px;font-size:18px;color:#50565d;transform:scaleX(0.8819);transform-origin:0 0;">Sesi 1</div>
<div class="t" style="left:461.99px;top:593.30px;font-size:18px;color:#50565d;transform:scaleX(0.9821);transform-origin:0 0;">Muhammad Yusuf</div>
<div class="t" style="left:751.59px;top:593.30px;font-size:18px;color:#50565d;transform:scaleX(0.8718);transform-origin:0 0;">TAFSHILI 1</div>
<div class="t" style="left:1348.11px;top:593.30px;font-size:18px;color:#50565d;transform:scaleX(0.9610);transform-origin:0 0;">0</div>
<div class="t" style="left:1505.21px;top:593.30px;font-size:18px;color:#50565d;transform:scaleX(0.9671);transform-origin:0 0;">Rizki Wulan Mawardani, A.Md</div>
<div class="t" style="left:1789.94px;top:593.30px;font-size:18px;color:#50565d;transform:scaleX(1.0123);transform-origin:0 0;">Draft</div>
<div class="a" style="left:183px;top:628.02px;width:1735px;height:49.8px;background:#fafafa;border-bottom:1px solid #dee2e6"></div><div class="a" style="left:203px;top:642.32px;width:17px;height:17px;border:1px solid #dadde2;border-radius:3px;background:#fff"></div><div class="t" style="left:238.35px;top:643.08px;font-size:18px;color:#50565d;transform:scaleX(0.9975);transform-origin:0 0;">16/07/2025</div>
<div class="t" style="left:350.59px;top:643.08px;font-size:18px;color:#50565d;transform:scaleX(0.8819);transform-origin:0 0;">Sesi 1</div>
<div class="t" style="left:461.96px;top:643.08px;font-size:18px;color:#50565d;transform:scaleX(0.9998);transform-origin:0 0;">Malik Ahmad Alghani</div>
<div class="t" style="left:751.59px;top:643.08px;font-size:18px;color:#50565d;transform:scaleX(0.8718);transform-origin:0 0;">TAFSHILI 1</div>
<div class="t" style="left:1348.11px;top:643.08px;font-size:18px;color:#50565d;transform:scaleX(0.9610);transform-origin:0 0;">0</div>
<div class="t" style="left:1505.21px;top:643.08px;font-size:18px;color:#50565d;transform:scaleX(0.9671);transform-origin:0 0;">Rizki Wulan Mawardani, A.Md</div>
<div class="t" style="left:1789.94px;top:643.08px;font-size:18px;color:#50565d;transform:scaleX(1.0123);transform-origin:0 0;">Draft</div>
<div class="a" style="left:183px;top:677.80px;width:1735px;height:49.8px;background:#ffffff;border-bottom:1px solid #dee2e6"></div><div class="a" style="left:203px;top:692.10px;width:17px;height:17px;border:1px solid #dadde2;border-radius:3px;background:#fff"></div><div class="t" style="left:238.35px;top:692.86px;font-size:18px;color:#50565d;transform:scaleX(0.9975);transform-origin:0 0;">16/07/2025</div>
<div class="t" style="left:350.59px;top:692.86px;font-size:18px;color:#50565d;transform:scaleX(0.8819);transform-origin:0 0;">Sesi 1</div>
<div class="t" style="left:463.40px;top:692.86px;font-size:18px;color:#50565d;transform:scaleX(0.9677);transform-origin:0 0;">Ayesha Adifa Anggraeni</div>
<div class="t" style="left:751.59px;top:692.86px;font-size:18px;color:#50565d;transform:scaleX(0.8718);transform-origin:0 0;">TAFSHILI 1</div>
<div class="t" style="left:1348.11px;top:692.86px;font-size:18px;color:#50565d;transform:scaleX(0.9610);transform-origin:0 0;">0</div>
<div class="t" style="left:1505.21px;top:692.86px;font-size:18px;color:#50565d;transform:scaleX(0.9671);transform-origin:0 0;">Rizki Wulan Mawardani, A.Md</div>
<div class="t" style="left:1789.94px;top:692.86px;font-size:18px;color:#50565d;transform:scaleX(1.0123);transform-origin:0 0;">Draft</div>
<div class="a" style="left:183px;top:727.58px;width:1735px;height:49.8px;background:#fafafa;border-bottom:1px solid #dee2e6"></div><div class="a" style="left:203px;top:741.88px;width:17px;height:17px;border:1px solid #dadde2;border-radius:3px;background:#fff"></div><div class="t" style="left:238.35px;top:742.64px;font-size:18px;color:#50565d;transform:scaleX(0.9975);transform-origin:0 0;">16/07/2025</div>
<div class="t" style="left:350.59px;top:742.64px;font-size:18px;color:#50565d;transform:scaleX(0.8819);transform-origin:0 0;">Sesi 1</div>
<div class="t" style="left:463.40px;top:742.64px;font-size:18px;color:#50565d;transform:scaleX(0.9538);transform-origin:0 0;">Alifiya Aqsa Shanum</div>
<div class="t" style="left:751.59px;top:742.64px;font-size:18px;color:#50565d;transform:scaleX(0.8718);transform-origin:0 0;">TAFSHILI 1</div>
<div class="t" style="left:1348.11px;top:742.64px;font-size:18px;color:#50565d;transform:scaleX(0.9610);transform-origin:0 0;">0</div>
<div class="t" style="left:1505.21px;top:742.64px;font-size:18px;color:#50565d;transform:scaleX(0.9671);transform-origin:0 0;">Rizki Wulan Mawardani, A.Md</div>
<div class="t" style="left:1789.94px;top:742.64px;font-size:18px;color:#50565d;transform:scaleX(1.0123);transform-origin:0 0;">Draft</div>
<div class="a" style="left:183px;top:777.36px;width:1735px;height:49.8px;background:#ffffff;border-bottom:1px solid #dee2e6"></div><div class="a" style="left:203px;top:791.66px;width:17px;height:17px;border:1px solid #dadde2;border-radius:3px;background:#fff"></div><div class="t" style="left:238.35px;top:792.42px;font-size:18px;color:#50565d;transform:scaleX(0.9975);transform-origin:0 0;">16/07/2025</div>
<div class="t" style="left:350.59px;top:792.42px;font-size:18px;color:#50565d;transform:scaleX(0.8819);transform-origin:0 0;">Sesi 1</div>
<div class="t" style="left:463.40px;top:792.42px;font-size:18px;color:#50565d;transform:scaleX(0.9657);transform-origin:0 0;">Ahmad Dzulkarnain Al-Banjari</div>
<div class="t" style="left:751.59px;top:792.42px;font-size:18px;color:#50565d;transform:scaleX(0.8718);transform-origin:0 0;">TAFSHILI 1</div>
<div class="t" style="left:1348.11px;top:792.42px;font-size:18px;color:#50565d;transform:scaleX(0.9610);transform-origin:0 0;">0</div>
<div class="t" style="left:1505.21px;top:792.42px;font-size:18px;color:#50565d;transform:scaleX(0.9671);transform-origin:0 0;">Rizki Wulan Mawardani, A.Md</div>
<div class="t" style="left:1789.94px;top:792.42px;font-size:18px;color:#50565d;transform:scaleX(1.0123);transform-origin:0 0;">Draft</div>
<div class="a" style="left:183px;top:827.14px;width:1735px;height:49.8px;background:#fafafa;border-bottom:1px solid #dee2e6"></div><div class="a" style="left:203px;top:841.44px;width:17px;height:17px;border:1px solid #dadde2;border-radius:3px;background:#fff"></div><div class="t" style="left:238.35px;top:842.20px;font-size:18px;color:#50565d;transform:scaleX(0.9975);transform-origin:0 0;">16/07/2025</div>
<div class="t" style="left:350.59px;top:842.20px;font-size:18px;color:#50565d;transform:scaleX(0.8819);transform-origin:0 0;">Sesi 1</div>
<div class="t" style="left:462.02px;top:842.20px;font-size:18px;color:#50565d;transform:scaleX(0.9608);transform-origin:0 0;">Muhammad Fawwaz</div>
<div class="t" style="left:751.59px;top:842.20px;font-size:18px;color:#50565d;transform:scaleX(0.8718);transform-origin:0 0;">TAFSHILI 1</div>
<div class="t" style="left:1348.11px;top:842.20px;font-size:18px;color:#50565d;transform:scaleX(0.9610);transform-origin:0 0;">0</div>
<div class="t" style="left:1505.21px;top:842.20px;font-size:18px;color:#50565d;transform:scaleX(0.9671);transform-origin:0 0;">Rizki Wulan Mawardani, A.Md</div>
<div class="t" style="left:1789.94px;top:842.20px;font-size:18px;color:#50565d;transform:scaleX(1.0123);transform-origin:0 0;">Draft</div>
<div class="a" style="left:183px;top:876.92px;width:1735px;height:49.8px;background:#ffffff;border-bottom:1px solid #dee2e6"></div><div class="a" style="left:203px;top:891.22px;width:17px;height:17px;border:1px solid #dadde2;border-radius:3px;background:#fff"></div><div class="t" style="left:238.35px;top:891.98px;font-size:18px;color:#50565d;transform:scaleX(0.9975);transform-origin:0 0;">16/07/2025</div>
<div class="t" style="left:350.59px;top:891.98px;font-size:18px;color:#50565d;transform:scaleX(0.8819);transform-origin:0 0;">Sesi 1</div>
<div class="t" style="left:463.40px;top:891.98px;font-size:18px;color:#50565d;transform:scaleX(0.9551);transform-origin:0 0;">Arkana Umar Darmaji</div>
<div class="t" style="left:751.59px;top:891.98px;font-size:18px;color:#50565d;transform:scaleX(0.8718);transform-origin:0 0;">TAFSHILI 1</div>
<div class="t" style="left:1348.11px;top:891.98px;font-size:18px;color:#50565d;transform:scaleX(0.9610);transform-origin:0 0;">0</div>
<div class="t" style="left:1505.21px;top:891.98px;font-size:18px;color:#50565d;transform:scaleX(0.9671);transform-origin:0 0;">Rizki Wulan Mawardani, A.Md</div>
<div class="t" style="left:1789.94px;top:891.98px;font-size:18px;color:#50565d;transform:scaleX(1.0123);transform-origin:0 0;">Draft</div>
<div class="a" style="left:1910px;top:132px;width:8px;height:779px;background:#f5f6f8"></div><div class="a" style="left:1910px;top:132.7px;width:8px;height:547px;background:#878787;border-radius:4px"></div><div class="a" style="left:417px;top:122px;width:915px;height:170px;background:#fff"></div><svg style="left:405px;top:110px" width="940" height="195"><rect x="11.8" y="12" width="915.5" height="170" rx="0.8" fill="none" stroke="#ff0000" stroke-width="3.6"/></svg><svg style="left:456px;top:151px" width="16" height="16"><path d="M0.3 0.3 H15.3 L9.6 6.8 V15.5 L5.8 12.2 V6.8Z" fill="#0e5a53"/></svg><div class="t" style="left:482.53px;top:150.70px;font-size:17.6px;color:#212529;font-weight:bold;transform:scaleX(1.0265);transform-origin:0 0;">Penyaring</div>
<div class="t" style="left:462.50px;top:190.71px;font-size:17px;color:#4a5058;">Hari Ini</div>
<div class="a" style="left:437px;top:225px;width:272px;height:1px;background:#dee2e6"></div><div class="t" style="left:462.50px;top:246.89px;font-size:16.9px;color:#4a5058;">Tambahkan Penyaring Sendiri</div>
<div class="a" style="left:729px;top:143.4px;width:1px;height:126.3px;background:#dee2e6"></div><svg style="left:770px;top:148.5px" width="20" height="20"><path d="M0.1 5.9 L9.5 0.4 L19 5.9 L9.5 10.6Z" fill="#17a05e"/><path d="M0.9 8.7 L9.5 13.1 L18 8.7 V11 L9.5 15.4 L0.9 11Z" fill="#17a05e"/><path d="M0.9 12.7 L9.5 17.1 L18 12.7 V15 L9.5 19.4 L0.9 15Z" fill="#17a05e"/></svg><div class="t" style="left:800.19px;top:150.11px;font-size:18.3px;color:#212529;font-weight:bold;transform:scaleX(1.0162);transform-origin:0 0;">Dikelompokkan</div>
<div class="t" style="left:770.90px;top:179.83px;font-size:17.8px;color:#212529;font-weight:bold;">berdasarkan</div>
<div class="t" style="left:775.90px;top:219.61px;font-size:17px;color:#4a5058;">Tambahkan Grup Kustom</div>
<svg style="left:997px;top:224.5px" width="10" height="6"><path d="M0 0.3 H9.3 L4.65 5.2Z" fill="#7b8085"/></svg><div class="a" style="left:1042px;top:143.4px;width:1px;height:100px;background:#dee2e6"></div><svg style="left:1082.5px;top:148.5px" width="19" height="18"><path d="M9.3 0.3 L11.9 5.9 L18 6.6 L13.5 10.8 L14.8 16.9 L9.3 13.8 L3.8 16.9 L5.1 10.8 L0.6 6.6 L6.7 5.9Z" fill="#f3cb00"/></svg><div class="t" style="left:1110.93px;top:150.79px;font-size:17.5px;color:#212529;font-weight:bold;transform:scaleX(1.0252);transform-origin:0 0;">Favorit</div>
<div class="t" style="left:1088.70px;top:190.61px;font-size:17px;color:#4a5058;">Simpan pencarian saat ini</div>
<svg style="left:1289px;top:195.5px" width="11" height="7"><path d="M0.3 0.5 H10.2 L5.25 6Z" fill="#4a5058"/></svg></body></html>
